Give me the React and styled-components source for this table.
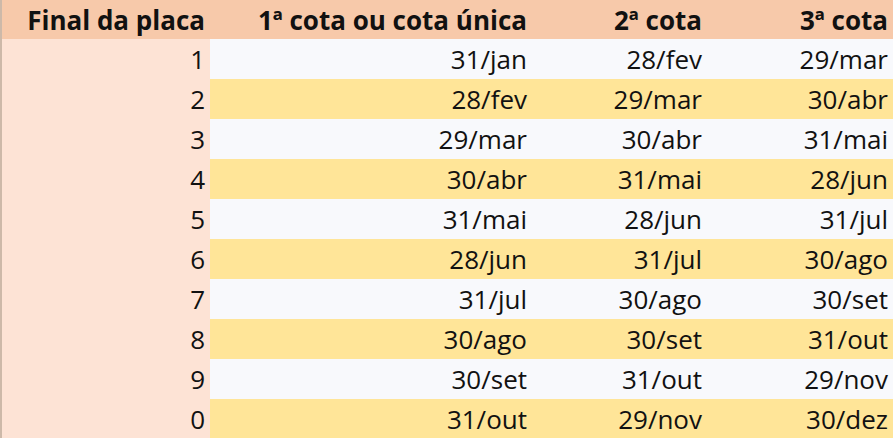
import React from 'react';
import styled, { createGlobalStyle } from 'styled-components';

const GlobalStyle = createGlobalStyle`
  html, body {
    margin: 0;
    padding: 0;
    background: #ffffff;
  }
  body {
    font-family: "Open Sans", "Noto Sans", "Liberation Sans", sans-serif;
  }
`;

const rows = [
  ['1', '31/jan', '28/fev', '29/mar'],
  ['2', '28/fev', '29/mar', '30/abr'],
  ['3', '29/mar', '30/abr', '31/mai'],
  ['4', '30/abr', '31/mai', '28/jun'],
  ['5', '31/mai', '28/jun', '31/jul'],
  ['6', '28/jun', '31/jul', '30/ago'],
  ['7', '31/jul', '30/ago', '30/set'],
  ['8', '30/ago', '30/set', '31/out'],
  ['9', '30/set', '31/out', '29/nov'],
  ['0', '31/out', '29/nov', '30/dez'],
];

const App = () => {
  return (
    <>
      <GlobalStyle />
      <Table>
        <HeadRow>
          <HeadCell>Final da placa</HeadCell>
          <HeadCell>1ª cota ou cota única</HeadCell>
          <HeadCell>2ª cota</HeadCell>
          <HeadCell>3ª cota</HeadCell>
        </HeadRow>
        {rows.map((r, i) => (
          <Row key={r[0]} $alt={i % 2 === 1}>
            <KeyCell>{r[0]}</KeyCell>
            <Cell>{r[1]}</Cell>
            <Cell>{r[2]}</Cell>
            <Cell>{r[3]}</Cell>
          </Row>
        ))}
      </Table>
    </>
  );
};

export default App;

const Table = styled.div`
  width: 893px;
  height: 438px;
  overflow: hidden;
  display: flex;
  flex-direction: column;
  border-left: 2px solid #cdb9a9;
  box-sizing: border-box;
  color: #111;
  font-size: 26px;
`;

const HeadRow = styled.div`
  display: grid;
  grid-template-columns: 208px 322px 175px 186px;
  height: 39px;
  flex-shrink: 0;
  background: #f7c9aa;
  font-weight: 700;
`;

const Row = styled.div`
  display: grid;
  grid-template-columns: 208px 322px 175px 186px;
  height: 40px;
  flex-shrink: 0;
  background: ${(p) => (p.$alt ? '#ffe598' : '#f8f9fc')};
`;

const HeadCell = styled.div`
  display: flex;
  align-items: center;
  justify-content: flex-end;
  padding-right: 5px;
  white-space: nowrap;
`;

const Cell = styled.div`
  display: flex;
  align-items: center;
  justify-content: flex-end;
  padding-right: 5px;
  white-space: nowrap;
`;

const KeyCell = styled(Cell)`
  background: #fde3d5;
`;
